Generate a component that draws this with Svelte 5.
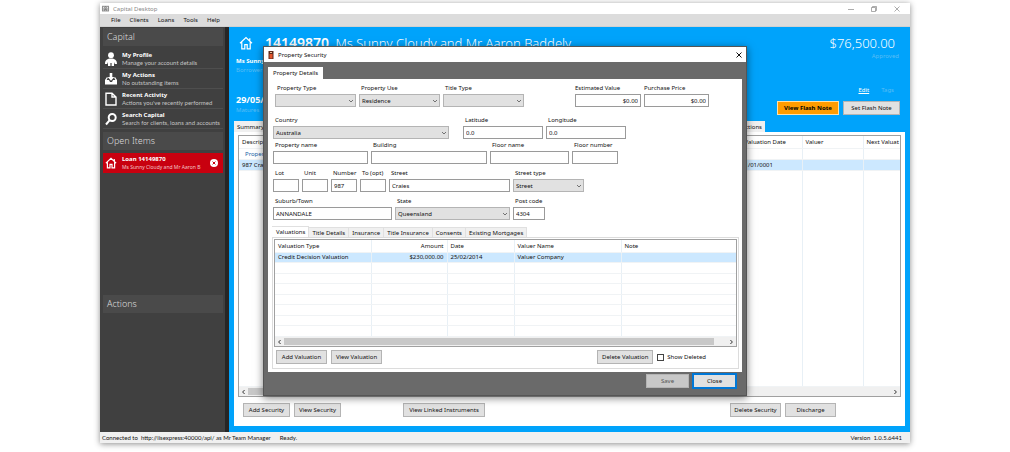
<script>
    let activeTab = $state('Valuations')
    let showDeleted = $state(false)

    const menus = ['File', 'Clients', 'Loans', 'Tools', 'Help']

    const links = [
        { icon: 'user', title: 'My Profile', text: 'Manage your account details' },
        { icon: 'inbox', title: 'My Actions', text: 'No outstanding items' },
        { icon: 'page', title: 'Recent Activity', text: "Actions you've recently performed" },
        { icon: 'search', title: 'Search Capital', text: 'Search for clients, loans and accounts' }
    ]

    const rows = [
        { name: 'basics', fields: [
            { id: 'ptype', label: 'Property Type', value: '', select: true },
            { id: 'puse', label: 'Property Use', value: 'Residence', select: true },
            { id: 'ttype', label: 'Title Type', value: '', select: true },
            { id: 'estimate', label: 'Estimated Value', value: '$0.00', money: true },
            { id: 'price', label: 'Purchase Price', value: '$0.00', money: true }
        ] },
        { name: 'place', fields: [
            { id: 'country', label: 'Country', value: 'Australia', select: true },
            { id: 'lat', label: 'Latitude', value: '0.0' },
            { id: 'lng', label: 'Longitude', value: '0.0' }
        ] },
        { name: 'building', fields: [
            { id: 'pname', label: 'Property name', value: '' },
            { id: 'building', label: 'Building', value: '' },
            { id: 'fname', label: 'Floor name', value: '' },
            { id: 'fnumber', label: 'Floor number', value: '' }
        ] },
        { name: 'street', fields: [
            { id: 'lot', label: 'Lot', value: '' },
            { id: 'unit', label: 'Unit', value: '' },
            { id: 'number', label: 'Number', value: '987' },
            { id: 'to', label: 'To (opt)', value: '' },
            { id: 'street', label: 'Street', value: 'Craies' },
            { id: 'stype', label: 'Street type', value: 'Street', select: true }
        ] },
        { name: 'suburb', fields: [
            { id: 'suburb', label: 'Suburb/Town', value: 'ANNANDALE' },
            { id: 'state', label: 'State', value: 'Queensland', select: true },
            { id: 'postcode', label: 'Post code', value: '4304' }
        ] }
    ]

    const tabs = ['Valuations', 'Title Details', 'Insurance', 'Title Insurance', 'Consents', 'Existing Mortgages']
    const emptyRows = [1, 2, 3, 4, 5, 6, 7]
</script>

{#snippet house()}
    <svg class="house" viewBox="0 0 14 14" aria-hidden="true">
        <path d="M1 7.2 7 1.6l6 5.6M2.8 6.2v6.6h3V8.6h2.4v4.2h3V6.2M10.8 4.6V2.2" />
    </svg>
{/snippet}

{#snippet scrollbar()}
    <div class="scrollbar">
        <svg viewBox="0 0 5 6"><path d="M3.6 1 1.6 3l2 2" /></svg>
        <div class="thumb"></div>
        <svg viewBox="0 0 5 6"><path d="M1.4 1l2 2-2 2" /></svg>
    </div>
{/snippet}

<div class="window">
    <header class="titlebar">
        <svg class="app-icon" viewBox="0 0 10 8" aria-hidden="true">
            <path d="M1 1.5h8M1 6.8h8M1.5 2v4.5M8.5 2v4.5M3.2 3v3M6.8 3v3" />
            <circle cx="5" cy="3.2" r="1" /><path d="M4 6.5V5h2v1.5" />
        </svg>
        <span>Capital Desktop</span>
        <div class="controls">
            <button aria-label="Minimise"><svg viewBox="0 0 6 6"><path d="M0 3.5h6" /></svg></button>
            <button aria-label="Restore"><svg viewBox="0 0 6 6"><path d="M.5 1.5h4v4h-4zM1.5 1.5v-1h4v4h-1" /></svg></button>
            <button aria-label="Close window"><svg viewBox="0 0 6 6"><path d="M.5.5l5 5M5.5.5l-5 5" /></svg></button>
        </div>
    </header>

    <nav class="menubar">
        {#each menus as menu}
            <button>{menu}</button>
        {/each}
    </nav>

    <div class="body">
        <aside class="sidebar">
            <h2>Capital</h2>
            {#each links as link}
                <button class="side-item">
                    {#if link.icon === 'user'}
                        <svg viewBox="0 0 12 14"><circle cx="6" cy="3.2" r="2.9" /><path d="M0 12C0 8 2.500 6.600 6 6.600S12 8 12 12H9.800L9 10V14H6.600v-3H5.400v3H3v-4l-.8 2z" /></svg>
                    {:else if link.icon === 'inbox'}
                        <svg viewBox="0 0 12 14"><path d="M4.7 1h2.6v4h2L6 8.8 2.7 5h2z" /><path d="M0 8l2-3 .9.8L1.6 8H4l1 2h2l1-2h2.4L9.1 5.8 10 5l2 3v4.5H0z" /></svg>
                    {:else if link.icon === 'page'}
                        <svg class="line" viewBox="0 0 12 14"><path d="M1 1.2h6L11 5v8H1zM7 1.2V5h4" /></svg>
                    {:else}
                        <svg class="line thick" viewBox="0 0 12 14"><circle cx="7.2" cy="5.5" r="3.5" /><path d="M4.7 8.2 1 12.5" /></svg>
                    {/if}
                    <span><b>{link.title}</b><small>{link.text}</small></span>
                </button>
            {/each}
            <section class="open-items">
                <h2>Open Items</h2>
                <div class="side-item loan">
                    {@render house()}
                    <span><b>Loan 14149870</b><small>Ms Sunny Cloudy and Mr Aaron B</small></span>
                    <button class="dismiss" aria-label="Close loan">
                        <svg viewBox="0 0 8 8"><circle cx="4" cy="4" r="4" /><path d="M2.6 2.6l2.8 2.8M5.4 2.6 2.6 5.4" /></svg>
                    </button>
                </div>
            </section>
            <h2>Actions</h2>
        </aside>

        <main>
            <div class="summary">
                <div class="heading">
                    {@render house()}
                    <h1><b>14149870</b> Ms Sunny Cloudy and Mr Aaron Baddely</h1>
                    <span class="amount">$76,500.00</span>
                </div>
                <div class="split people"><b>Ms Sunny Cloudy</b><span class="faint">Approved</span></div>
                <div class="faint">Borrower</div>
                <div class="split tags"><a href="#edit">Edit</a><span class="faint">Tags</span></div>
                <div class="split flash">
                    <div><b class="date">29/05/2044</b><div class="faint">Matures</div></div>
                    <div class="flash-buttons">
                        <button class="btn orange">View Flash Note</button>
                        <button class="btn">Set Flash Note</button>
                    </div>
                </div>
            </div>

            <div class="main-tabs"><button>Summary</button><button>Transactions</button></div>
            <div class="panel">
                <div class="list">
                    <table class="securities">
                        <thead>
                            <tr><th>Description</th><th>Valuation Date</th><th>Valuer</th><th>Next Valuat</th></tr>
                        </thead>
                        <tbody>
                            <tr class="group"><td>Property</td><td></td><td></td><td></td></tr>
                            <tr class="selected"><td>987 Craies Street</td><td>1/01/0001</td><td></td><td></td></tr>
                            <tr class="rest"><td></td><td></td><td></td><td></td></tr>
                        </tbody>
                    </table>
                    {@render scrollbar()}
                </div>
                <div class="panel-buttons">
                    <button class="btn">Add Security</button>
                    <button class="btn">View Security</button>
                    <button class="btn linked">View Linked Instruments</button>
                    <button class="btn delete">Delete Security</button>
                    <button class="btn discharge">Discharge</button>
                </div>
            </div>
        </main>
    </div>

    <footer class="status">
        <span>Connected to&nbsp; http://iisexpress:40000/api/ as Mr Team Manager</span>
        <span class="ready">Ready.</span>
        <span class="version">Version&nbsp; 1.0.5.6441</span>
    </footer>

    <div class="dialog" role="dialog" aria-labelledby="dialog-title">
        <div class="dialog-title">
            <svg class="door" viewBox="0 0 6 8"><path fill="#5b2a1c" d="M.5 0h5v8h-5z" /><path fill="#e4552c" d="M1.5 3h3v4.500h-3z" /><path fill="#f2c6a0" d="M2 1h2v1H2z" /></svg>
            <span id="dialog-title">Property Security</span>
            <button aria-label="Close dialog"><svg viewBox="0 0 6 6"><path d="M.5.5l5 5M5.5.5l-5 5" /></svg></button>
        </div>
        <div class="dialog-body">
            <button class="details-tab">Property Details</button>
            <div class="details">
                {#each rows as row}
                    <div class="row {row.name}">
                        {#each row.fields as field}
                            <div class="field" class:money={field.money}>
                                <label for={field.id}>{field.label}</label>
                                {#if field.select}
                                    <div class="select">
                                        <select id={field.id}><option>{field.value}</option></select>
                                        <svg viewBox="0 0 6 4"><path d="M1 1l2 2 2-2" /></svg>
                                    </div>
                                {:else}
                                    <input id={field.id} type="text" value={field.value} />
                                {/if}
                            </div>
                        {/each}
                    </div>
                {/each}

                <div class="tabs" role="tablist">
                    {#each tabs as tab}
                        <button role="tab" aria-selected={activeTab === tab} class:active={activeTab === tab} onclick={() => activeTab = tab}>{tab}</button>
                    {/each}
                </div>
                <div class="tab-panel">
                    <div class="list">
                        <table class="valuations">
                            <thead>
                                <tr><th>Valuation Type</th><th class="num">Amount</th><th>Date</th><th>Valuer Name</th><th>Note</th></tr>
                            </thead>
                            <tbody>
                                <tr class="selected"><td>Credit Decision Valuation</td><td class="num">$230,000.00</td><td>25/02/2014</td><td>Valuer Company</td><td></td></tr>
                                {#each emptyRows as n (n)}
                                    <tr><td></td><td></td><td></td><td></td><td></td></tr>
                                {/each}
                            </tbody>
                        </table>
                        {@render scrollbar()}
                    </div>
                    <div class="valuation-buttons">
                        <button class="btn">Add Valuation</button>
                        <button class="btn">View Valuation</button>
                        <button class="btn remove">Delete Valuation</button>
                        <label class="check"><input type="checkbox" bind:checked={showDeleted} />Show Deleted</label>
                    </div>
                </div>
            </div>
            <div class="dialog-buttons">
                <button class="btn save" disabled>Save</button>
                <button class="btn close">Close</button>
            </div>
        </div>
    </div>
</div>

<style>
:global(body) {
    margin: 0;
    background: #fff;
}

.window, .window * {
    box-sizing: border-box;
}

.window {
    position: relative;
    display: flex;
    flex-direction: column;
    min-height: calc(100vh - 12px);
    margin: 3px 100px 9px;
    font: 6px/8px "Noto Sans", "Open Sans", sans-serif;
    color: #111;
    background: #fff;
    box-shadow: 0 1px 6px rgba(0, 0, 0, 0.45);
}

button, input, select {
    margin: 0;
    padding: 0;
    border: 0;
    border-radius: 0;
    font: inherit;
    color: inherit;
    background: none;
}

svg {
    display: block;
    fill: none;
    stroke: currentColor;
}

h1, h2 {
    margin: 0;
    font-weight: 300;
}

/* window chrome */
.titlebar {
    display: flex;
    align-items: center;
    gap: 3px;
    height: 11px;
    padding: 0 10px 0 1px;
    color: #888;
}

.app-icon {
    width: 9px;
    height: 7px;
    color: #555;
    stroke-width: 0.8;
}

.controls {
    display: flex;
    gap: 17px;
    margin-left: auto;
}

.controls svg {
    width: 6px;
    height: 6px;
    stroke-width: 0.7;
}

.menubar {
    display: flex;
    gap: 9px;
    height: 13px;
    padding-left: 11px;
    background: #dcdcdc;
    border-bottom: 1px solid #d0d0d0;
}

.status {
    display: flex;
    align-items: center;
    gap: 9px;
    height: 11px;
    padding: 0 8px 0 2px;
    font-family: Lato, "Noto Sans", sans-serif;
    background: #f0f0f0;
}

.version {
    margin-left: auto;
}

.body {
    display: flex;
    flex: 1;
}

/* sidebar */
.sidebar {
    width: 129px;
    padding: 1px 2px 0 3px;
    color: #fff;
    background: #404040;
    border-right: 4px solid #262626;
}

.sidebar h2 {
    height: 18px;
    margin-bottom: 3px;
    padding-left: 4px;
    font-size: 9px;
    line-height: 18px;
    color: #ddd;
    background: #4a4a4a;
}

.side-item {
    display: flex;
    align-items: center;
    gap: 5px;
    width: 100%;
    height: 20px;
    padding-left: 2px;
    text-align: left;
    border-bottom: 1px solid #4e4e4e;
}

.side-item > svg {
    width: 12px;
    height: 14px;
    flex: none;
    fill: #fff;
    stroke: none;
}

.side-item > .line, .side-item > .house {
    fill: none;
    stroke: #fff;
    stroke-width: 1.4;
}

.side-item > .thick {
    stroke-width: 2;
}

.side-item span {
    flex: 1;
    white-space: nowrap;
}

.side-item b, .side-item small {
    display: block;
    font-size: 6px;
    line-height: 8px;
}

.side-item small {
    font-family: Lato, "Noto Sans", sans-serif;
    color: #c4c4c4;
}

.open-items {
    min-height: 166px;
    padding-top: 3px;
}

.side-item.loan {
    background: #c8000f;
    border: 0;
}

.side-item.loan small {
    font-family: "Noto Sans", sans-serif;
    font-size: 5px;
    color: #f3c5c8;
}

.dismiss {
    margin-right: 5px;
}

.dismiss svg {
    width: 8px;
    height: 8px;
    fill: #fff;
    stroke: #c8000f;
}

.dismiss circle {
    stroke: none;
}

/* loan summary */
main {
    display: flex;
    flex: 1;
    flex-direction: column;
    min-width: 0;
    padding: 6px 5px 6px;
    background: #00a3fb;
}

.summary {
    height: 88px;
    padding-left: 2px;
    color: #fff;
}

.heading {
    display: flex;
    align-items: center;
    height: 19px;
    padding: 0 10px 0 3px;
}

.heading .house {
    width: 14px;
    height: 14px;
    margin-right: 12px;
    stroke-width: 1.2;
}

h1 {
    font-size: 13px;
    line-height: 18px;
    white-space: nowrap;
}

h1 b {
    margin-right: 3px;
    font-size: 14px;
    font-weight: 600;
}

.amount {
    margin-left: auto;
    font-size: 13px;
    font-weight: 300;
}

.split {
    display: flex;
    justify-content: space-between;
}

.people {
    padding-right: 6px;
}

.people b {
    padding-top: 4px;
    line-height: 10px;
}

.faint {
    color: #5abdf5;
}

.tags {
    justify-content: flex-end;
    gap: 12px;
    margin-top: 12px;
    padding-right: 11px;
}

.tags a {
    color: #fff;
}

.date {
    font-size: 9px;
    line-height: 12px;
}

.flash-buttons {
    display: flex;
    gap: 4px;
    padding: 7px 5px 0 0;
}

.btn {
    height: 14px;
    padding: 0 4px;
    color: #111;
    white-space: nowrap;
    background: #e1e1e1;
    border: 1px solid #b4b4b4;
}

.flash-buttons .btn {
    width: 57px;
    padding: 0;
}

.flash-buttons .orange {
    width: 62px;
    font-weight: 700;
    color: #000;
    background: #ff9c00;
    border-color: #ffe0a8;
}

.main-tabs {
    display: flex;
    justify-content: space-between;
    height: 11px;
    padding-right: 140px;
}

.main-tabs button {
    padding: 0 3px;
    background: #f0f0f0;
}

.panel {
    display: flex;
    flex: 1;
    flex-direction: column;
    padding: 3px 4px 9px;
    background: #fff;
}

.list {
    display: flex;
    flex: 1;
    flex-direction: column;
    border: 1px solid #a0a0a0;
}

table {
    flex: 1;
    width: 100%;
    table-layout: fixed;
    border-collapse: collapse;
}

th, td {
    height: 11px;
    padding: 0 3px;
    overflow: hidden;
    font-weight: 400;
    line-height: 8px;
    text-align: left;
    white-space: nowrap;
    border-right: 1px solid #e8f0f6;
    border-bottom: 1px solid #f0f3f5;
}

th:last-child, td:last-child {
    border-right: 0;
}

.selected td {
    background: #cce8ff;
}

.securities th:nth-child(2) {
    width: 61px;
}

.securities th:nth-child(3) {
    width: 61px;
}

.securities th:nth-child(4) {
    width: 37px;
}

.securities th, .securities td {
    padding: 0 0 0 3px;
}

.securities th {
    height: 12px;
}

.securities .group td:first-child {
    padding-left: 6px;
    color: #1a5fa8;
}

.securities .rest td {
    height: auto;
}

.scrollbar {
    display: flex;
    align-items: center;
    height: 9px;
    padding: 0 2px;
    color: #333;
    background: #f0f0f0;
}

.scrollbar svg {
    width: 5px;
    height: 6px;
}

.thumb {
    width: 70%;
    height: 7px;
    margin: 0 auto 0 2px;
    background: #c8c8c8;
}

.panel-buttons {
    display: flex;
    gap: 4px;
    padding: 6px 65px 0 5px;
}

.panel-buttons .btn {
    width: 47px;
    padding: 0;
}

.panel-buttons .linked {
    width: 82px;
    margin-left: 58px;
}

.panel-buttons .delete {
    width: 51px;
    margin-left: auto;
}

.panel-buttons .discharge {
    width: 51px;
}

/* property dialog */
.dialog {
    position: absolute;
    top: 43px;
    left: 163px;
    right: 163px;
    background: #6a6a6a;
    border: 1px solid #555;
    box-shadow: 0 2px 8px rgba(0, 0, 0, 0.5);
}

.dialog-title {
    display: flex;
    align-items: center;
    gap: 4px;
    height: 15px;
    padding: 0 4px;
    background: #fff;
}

.dialog-title button {
    margin-left: auto;
}

.dialog-title button svg {
    width: 6px;
    height: 6px;
}

.door {
    width: 6px;
    height: 8px;
    stroke: none;
}

.dialog-body {
    padding: 5px 4px 7px;
}

.details-tab {
    display: block;
    height: 12px;
    padding: 0 5px;
    background: #fff;
}

.details {
    padding: 5px 3px 3px 4px;
    background: #fff;
}

.row {
    display: grid;
    gap: 3px;
    padding-left: 1px;
    margin-bottom: 5px;
}

.basics {
    grid-template-columns: 81px 81px 81px 1fr 66px 65px;
    margin-bottom: 9px;
    padding: 0 30px 0 3px;
}

.basics .field:nth-child(4) {
    grid-column: 5;
}

.place {
    grid-template-columns: 176px 8px 80px 80px;
    margin-bottom: 2px;
}

.place .field:nth-child(2) {
    grid-column: 3;
}

.building {
    grid-template-columns: 95px 116px 79px 46px;
}

.street {
    grid-template-columns: 26px 26px 26px 26px 121px 71px;
}

.suburb {
    grid-template-columns: 119px 115px 32px;
    margin-bottom: 6px;
}

.field label {
    display: block;
    height: 9px;
    margin-bottom: 1px;
    padding-left: 2px;
    white-space: nowrap;
}

.field input {
    display: block;
    width: 100%;
    height: 13px;
    padding: 0 2px;
    background: #fff;
    border: 1px solid #9a9a9a;
}

.field.money input {
    text-align: right;
}

.field.money label {
    padding-left: 0;
}

.select {
    display: grid;
    align-items: center;
}

.select select, .select svg {
    grid-area: 1 / 1;
}

.select select {
    width: 100%;
    height: 13px;
    padding: 0 2px;
    appearance: none;
    background: #e1e1e1;
    border: 1px solid #b4b4b4;
}

.select svg {
    justify-self: end;
    width: 6px;
    height: 4px;
    margin-right: 2px;
    stroke: #555;
    stroke-width: 0.8;
    pointer-events: none;
}

.tabs {
    display: flex;
    align-items: flex-end;
}

.tabs button {
    height: 10px;
    padding: 0 3px;
    background: #f0f0f0;
    border: 1px solid #e0e0e0;
    border-width: 1px 1px 0 0;
}

.tabs .active {
    height: 11px;
    padding-left: 4px;
    background: #fff;
}

.tab-panel {
    padding: 1px;
    border: 1px solid #dcdcdc;
}

.tab-panel .list {
    min-height: 108px;
}

.valuations th:nth-child(1) {
    width: 96px;
}

.valuations th:nth-child(2) {
    width: 76px;
}

.valuations th:nth-child(3) {
    width: 67px;
}

.valuations th:nth-child(4) {
    width: 107px;
}

.valuations th {
    height: 12px;
}

.valuations td {
    height: 10px;
}

.valuations .num {
    text-align: right;
}

.dialog .thumb {
    width: 94%;
}

.valuation-buttons {
    display: flex;
    align-items: center;
    gap: 4px;
    padding: 3px 31px 3px 2px;
}

.valuation-buttons .btn {
    width: 51px;
    padding: 0;
}

.valuation-buttons .remove {
    width: 56px;
    margin-left: auto;
}

.check {
    display: flex;
    align-items: center;
    gap: 3px;
}

.check input {
    width: 7px;
    height: 7px;
    appearance: none;
    background: #fff;
    border: 1px solid #444;
}

.check input:checked {
    background: #0078d7;
}

.dialog-buttons {
    display: flex;
    justify-content: flex-end;
    gap: 4px;
    padding: 2px 6px 0 0;
}

.dialog-buttons .btn {
    width: 43px;
    height: 14px;
}

.dialog-buttons .save {
    color: #555;
    background: #c8c8c8;
}

.dialog-buttons .close {
    border: 1px solid #0078d7;
    outline: 1px solid #0078d7;
}
</style>
